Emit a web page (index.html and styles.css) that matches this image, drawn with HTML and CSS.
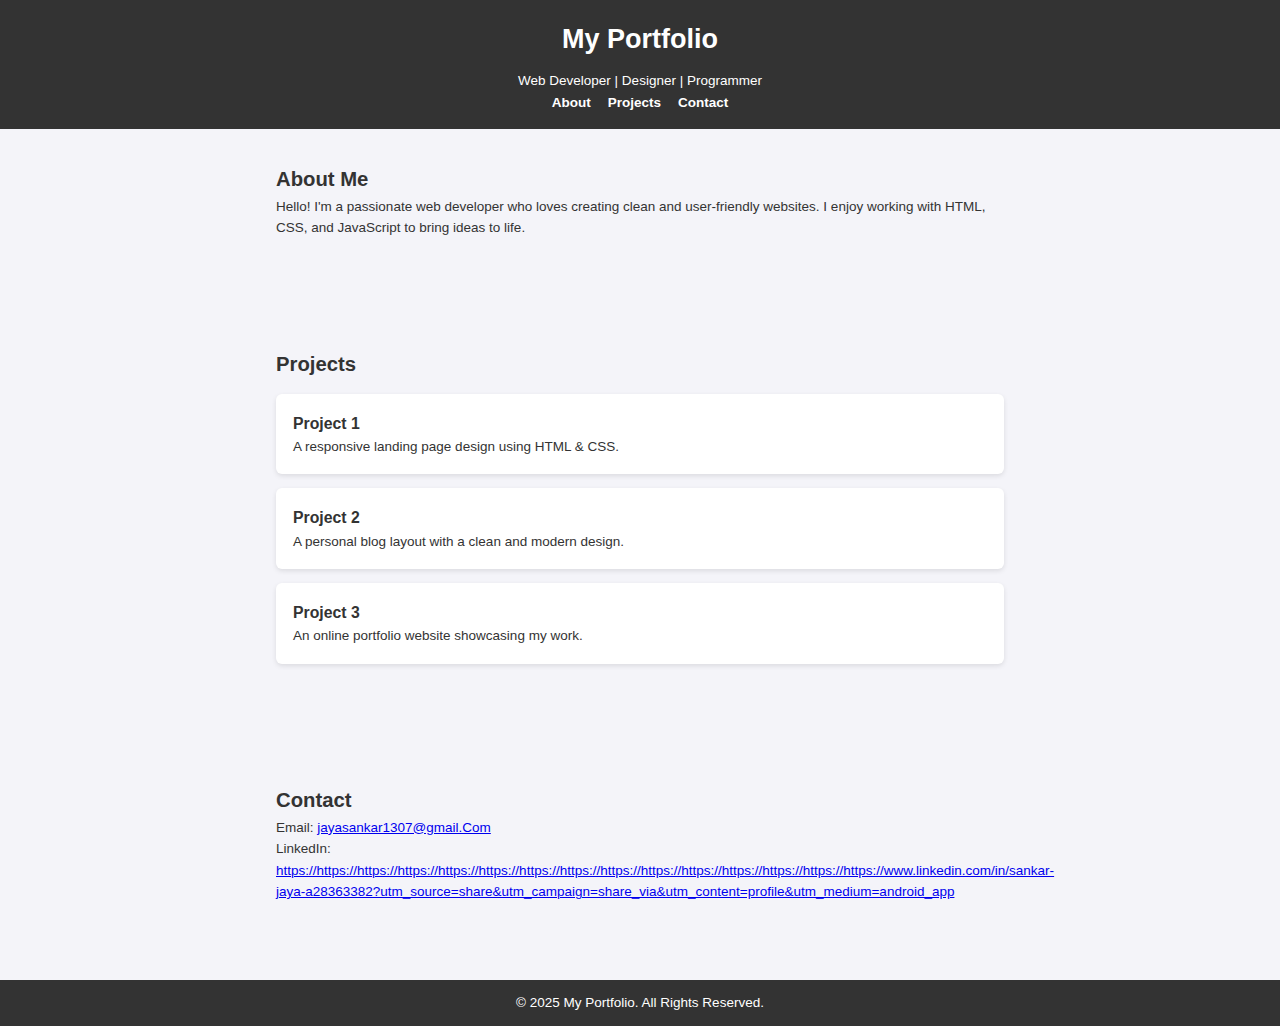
FILE: index.html
```html
<!DOCTYPE html>
<html lang="en">
<head>
<meta charset="utf-8">
<title>My Portfolio</title>
<link rel="stylesheet" href="styles.css">
</head>
<body>
<header class="site-header">
  <h1 class="site-title">My Portfolio</h1>
  <p class="tagline">Web Developer | Designer | Programmer</p>
  <nav class="nav">
    <a href="#about">About</a>
    <a href="#projects">Projects</a>
    <a href="#contact">Contact</a>
  </nav>
</header>
<main class="main">
  <section class="section" id="about">
    <h2>About Me</h2>
    <p>Hello! I'm a passionate web developer who loves creating clean and user-friendly websites. I enjoy working with HTML, CSS, and JavaScript to bring ideas to life.</p>
  </section>
  <section class="section" id="projects">
    <h2>Projects</h2>
    <div class="project-list">
      <div class="project">
        <h3>Project 1</h3>
        <p>A responsive landing page design using HTML &amp; CSS.</p>
      </div>
      <div class="project">
        <h3>Project 2</h3>
        <p>A personal blog layout with a clean and modern design.</p>
      </div>
      <div class="project">
        <h3>Project 3</h3>
        <p>An online portfolio website showcasing my work.</p>
      </div>
    </div>
  </section>
  <section class="section" id="contact">
    <h2>Contact</h2>
    <p>Email: <a href="mailto:jayasankar1307@gmail.com">jayasankar1307@gmail.Com</a></p>
    <p>LinkedIn: <a href="#">https://https://https://https://https://https://https://https://https://https://https://https://https://https://https://www.linkedin.com/in/sankar-jaya-a28363382?utm_source=share&amp;utm_campaign=share_via&amp;utm_content=profile&amp;utm_medium=android_app</a></p>
  </section>
</main>
<footer class="site-footer">
  <p>&copy; 2025 My Portfolio. All Rights Reserved.</p>
</footer>
</body>
</html>
```

FILE: styles.css
```css
* { box-sizing: border-box; }

body {
  margin: 0;
  font-family: "Liberation Sans", Arial, sans-serif;
  font-size: 13.5px;
  line-height: 1.6;
  color: #333;
  background: #f4f4f9;
}

.site-header {
  background: #333;
  color: #fff;
  text-align: center;
  padding: 18px 0 16px;
}

.site-title {
  margin: 0 0 9px;
  font-size: 27px;
  font-weight: bold;
}

.tagline {
  margin: 0;
}

.nav {
  display: flex;
  justify-content: center;
  gap: 17px;
}

.nav a {
  color: #fff;
  text-decoration: none;
  font-weight: bold;
}

.main {
  max-width: 728px;
  margin: 0 auto;
  padding: 34px 0 77px;
  display: flex;
  flex-direction: column;
  gap: 109px;
}

.section h2 {
  margin: 0;
  font-size: 20.3px;
}

.section p {
  margin: 0;
}

.section a {
  color: #0000ee;
}

.project-list {
  display: flex;
  flex-direction: column;
  gap: 14px;
  margin-top: 13px;
  padding-bottom: 11px;
}

.project {
  background: #fff;
  border-radius: 6px;
  padding: 17px;
  box-shadow: 0 2px 5px rgba(0, 0, 0, 0.1);
}

.project h3 {
  margin: 0;
  font-size: 15.8px;
}

.site-footer {
  background: #333;
  color: #fff;
  text-align: center;
  padding: 12px 0;
}

.site-footer p {
  margin: 0;
}
```
